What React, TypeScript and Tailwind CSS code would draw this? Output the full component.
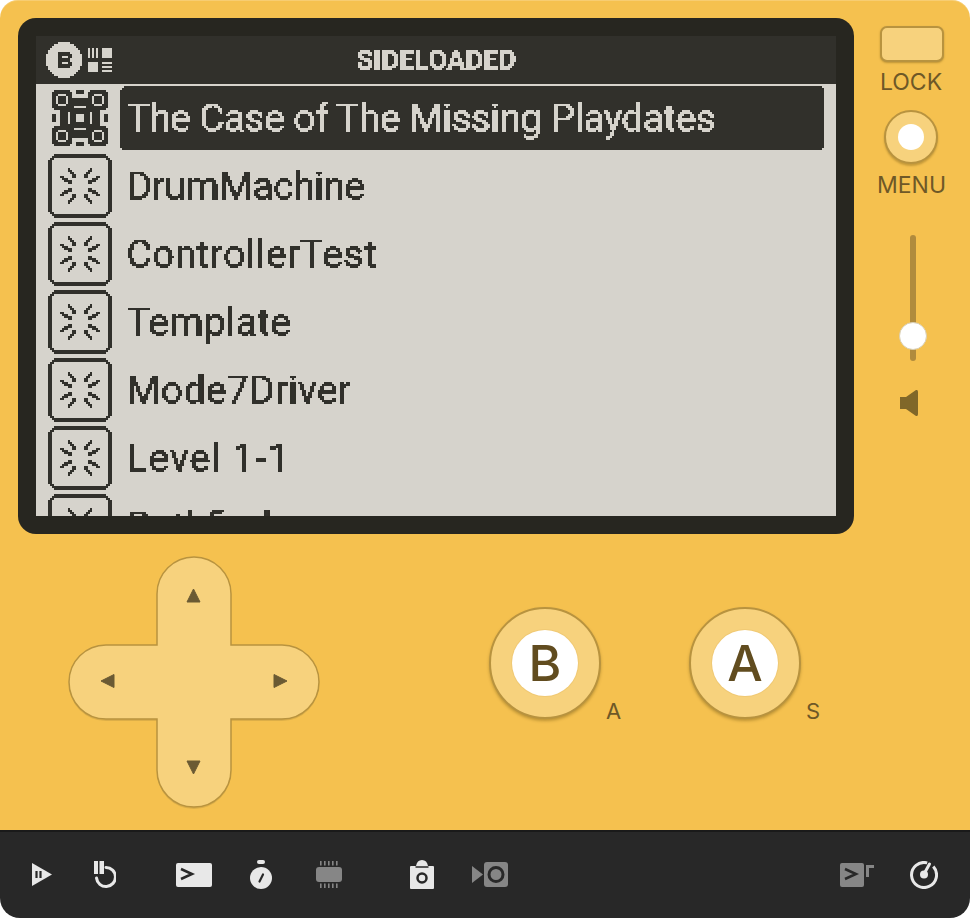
import React from 'react';

const DARK = '#31302B';
const LIGHT = '#D6D3CC';

const PixelFilter = () => (
    <svg className="absolute w-0 h-0" aria-hidden="true">
        <filter id="pixel" x="0" y="0" width="100%" height="100%" colorInterpolationFilters="sRGB" primitiveUnits="userSpaceOnUse">
            <feFlood floodColor="#000" floodOpacity="1" x="0" y="0" width="1" height="1" />
            <feComposite width="2" height="2" />
            <feTile result="grid" />
            <feComposite in="SourceGraphic" in2="grid" operator="in" />
            <feComponentTransfer result="hard">
                <feFuncA type="discrete" tableValues="0 1 1 1 1" />
            </feComponentTransfer>
            <feOffset in="hard" dx="1" dy="0" result="a" />
            <feMerge result="row">
                <feMergeNode in="hard" />
                <feMergeNode in="a" />
            </feMerge>
            <feOffset in="row" dx="0" dy="1" result="b" />
            <feMerge>
                <feMergeNode in="row" />
                <feMergeNode in="b" />
            </feMerge>
        </filter>
    </svg>
);

// one quadrant of the burst, in 32x32 icon pixels: [x, y, w]
const RAYS: number[][] = [
    [10, 7, 1], [10, 8, 2], [11, 9, 2], [12, 10, 2], [12, 11, 2],
    [6, 11, 2], [7, 12, 3], [8, 13, 4], [10, 14, 2],
];
const CORNERS: number[][] = [[2, 1], [2, 2], [1, 2]];

const BurstIcon = () => (
    <svg viewBox="0 0 32 32" className="w-16 h-16 shrink-0" shapeRendering="crispEdges" fill={DARK}>
        <rect x="3" y="0" width="26" height="2" />
        <rect x="3" y="30" width="26" height="2" />
        <rect x="0" y="3" width="2" height="26" />
        <rect x="30" y="3" width="2" height="26" />
        {CORNERS.map(([x, y]) => (
            <React.Fragment key={`${x}-${y}`}>
                <rect x={x} y={y} width="1" height="1" />
                <rect x={31 - x} y={y} width="1" height="1" />
                <rect x={x} y={31 - y} width="1" height="1" />
                <rect x={31 - x} y={31 - y} width="1" height="1" />
            </React.Fragment>
        ))}
        {RAYS.map(([x, y, w]) => (
            <React.Fragment key={`${x}-${y}`}>
                <rect x={x} y={y} width={w} height="1" />
                <rect x={32 - x - w} y={y} width={w} height="1" />
                <rect x={x} y={31 - y} width={w} height="1" />
                <rect x={32 - x - w} y={31 - y} width={w} height="1" />
            </React.Fragment>
        ))}
    </svg>
);

const Ring = ({ x, y }: { x: number; y: number }) => (
    <>
        <rect x={x + 1} y={y} width="8" height="10" fill={DARK} />
        <rect x={x} y={y + 1} width="10" height="8" fill={DARK} />
        <rect x={x + 3} y={y + 2} width="4" height="6" fill={LIGHT} />
        <rect x={x + 2} y={y + 3} width="6" height="4" fill={LIGHT} />
        <rect x={x + 3} y={y + 3} width="4" height="4" fill={DARK} />
    </>
);

const PatternIcon = () => (
    <svg viewBox="0 0 32 32" className="w-16 h-16 shrink-0" shapeRendering="crispEdges">
        <rect x="6" y="6" width="20" height="20" fill={DARK} />
        <rect x="14" y="2" width="4" height="2" fill={DARK} />
        <rect x="14" y="28" width="4" height="2" fill={DARK} />
        <rect x="2" y="14" width="2" height="4" fill={DARK} />
        <rect x="28" y="14" width="2" height="4" fill={DARK} />
        <Ring x={2} y={2} />
        <Ring x={20} y={2} />
        <Ring x={2} y={20} />
        <Ring x={20} y={20} />
        <rect x="13" y="10" width="6" height="12" fill={LIGHT} />
        <rect x="10" y="13" width="12" height="6" fill={LIGHT} />
        <rect x="13" y="11" width="6" height="10" fill={DARK} />
        <rect x="11" y="13" width="10" height="6" fill={DARK} />
        <rect x="14" y="14" width="4" height="4" fill={LIGHT} />
    </svg>
);

const HeaderBadge = () => (
    <svg viewBox="0 0 18 18" className="w-9 h-9" shapeRendering="crispEdges">
        <rect x="6" y="0" width="6" height="18" fill={LIGHT} />
        <rect x="4" y="1" width="10" height="16" fill={LIGHT} />
        <rect x="3" y="2" width="12" height="14" fill={LIGHT} />
        <rect x="2" y="3" width="14" height="12" fill={LIGHT} />
        <rect x="1" y="4" width="16" height="10" fill={LIGHT} />
        <rect x="0" y="6" width="18" height="6" fill={LIGHT} />
        <path d="M6 5h6v1h1v2h-1v2h1v2h-1v1H6z M8 7v1h3V7z M8 10v1h3v-1z" fill={DARK} fillRule="evenodd" />
    </svg>
);

const ViewIcon = () => (
    <svg viewBox="0 0 12 12" className="w-6 h-6 ml-[6px]" shapeRendering="crispEdges" fill={LIGHT}>
        <rect x="0" y="0" width="1" height="5" />
        <rect x="2" y="0" width="1" height="5" />
        <rect x="4" y="0" width="1" height="5" />
        <rect x="7" y="0" width="5" height="5" />
        <rect x="0" y="7" width="5" height="5" />
        <rect x="7" y="7" width="5" height="1" />
        <rect x="7" y="9" width="5" height="1" />
        <rect x="7" y="11" width="5" height="1" />
    </svg>
);

const GAMES = [
    { name: 'DrumMachine', tracking: 'tracking-[-0.5px]' },
    { name: 'ControllerTest', tracking: 'tracking-[0.4px]' },
    { name: 'Template', tracking: 'tracking-[0.3px]' },
    { name: 'Mode7Driver', tracking: 'tracking-[0.3px]' },
    { name: 'Level 1-1', tracking: 'tracking-[1px]' },
    { name: 'Pathfinder', tracking: 'tracking-normal' },
];

const Screen = () => (
    <div className="w-[800px] h-[480px] bg-[#D6D3CC] overflow-hidden">
        <div className="relative h-12 bg-[#31302B] flex items-center pl-[10px]">
            <HeaderBadge />
            <ViewIcon />
            <span className="absolute left-[320px] top-[10px] text-[27px] leading-[28px] font-bold text-[#D6D3CC] font-['Roboto',sans-serif] tracking-[0.2px] [filter:url(#pixel)]">
                SIDELOADED
            </span>
        </div>
        <div className="h-[68px] flex items-center pl-3">
            <PatternIcon />
            <div className="ml-2 w-[704px] h-16 bg-[#31302B] rounded-[6px] flex items-center pl-[6px] [filter:url(#pixel)]">
                <span className="text-[39px] leading-[48px] tracking-[-0.6px] text-[#D6D3CC] font-['Roboto',sans-serif] [filter:url(#pixel)]">
                    The Case of The Missing Playdates
                </span>
            </div>
        </div>
        {GAMES.map(game => (
            <div key={game.name} className="h-[68px] flex items-center pl-3">
                <BurstIcon />
                <span className={`ml-[14px] text-[39px] leading-[48px] text-[#31302B] font-['Roboto',sans-serif] [filter:url(#pixel)] ${game.tracking}`}>
                    {game.name}
                </span>
            </div>
        ))}
    </div>
);

const SideControls = () => (
    <div className="w-[116px] flex flex-col items-center pt-2 text-[#6E5827] font-['Inter',sans-serif]">
        <button className="w-16 h-9 rounded-[7px] bg-[#F7D27D] border-2 border-[#B8933F] shadow-[0_1px_2px_rgba(90,65,10,0.35)]" />
        <div className="mt-[6px] -ml-[2px] text-[23px] leading-[28px] font-normal">LOCK</div>
        <button className="mt-[14px] -ml-[2px] w-[54px] h-[54px] rounded-full bg-[#F7D27D] border-2 border-[#B8933F] shadow-[0_2px_2px_rgba(90,65,10,0.3)] flex items-center justify-center">
            <span className="w-[26px] h-[26px] rounded-full bg-white" />
        </button>
        <div className="mt-[7px] -ml-[1px] text-[23px] leading-[28px] font-normal">MENU</div>
        <div className="relative mt-[36px] ml-[2px] w-[6px] h-[126px] rounded-full bg-[#B08B3D]">
            <span className="absolute left-[-11px] top-[87px] w-7 h-7 rounded-full bg-white border border-[#D9CFB4]" />
        </div>
        <svg viewBox="0 0 18 26" className="mt-[29px] -ml-[7px] w-[18px] h-[26px]" fill="#806729">
            <path d="M0 7h6l10-7q2-.5 2 2v22q0 2.500-2 2L6 19H0z" />
        </svg>
    </div>
);

const CROSS = 'M90 89V38a37 37 0 0 1 74 0v51h51a37 37 0 0 1 0 74h-51v51a37 37 0 0 1-74 0v-51H39a37 37 0 0 1 0-74z';

const DPad = () => (
    <svg viewBox="0 0 254 256" className="w-[254px] h-[256px] shrink-0">
        <path d={CROSS} fill="#B08B3D" fillOpacity="0.35" transform="translate(0 2)" />
        <path d={CROSS} fill="#F7D27D" stroke="#B8933F" strokeWidth="1.500" />
        <g fill="#6B5A33" stroke="#6B5A33" strokeWidth="1" strokeLinejoin="round">
            <path d="M126.500 33l6.500 13h-13z" />
            <path d="M126.500 218l6.500-13h-13z" />
            <path d="M34 125l13-6.500v13z" />
            <path d="M220 125l-13-6.500v13z" />
        </g>
    </svg>
);

const RoundButton = ({ letter, hotkey }: { letter: string; hotkey: string }) => (
    <div className="relative w-[112px] h-[112px] shrink-0 rounded-full bg-[#F7D27D] border-2 border-[#B8933F] shadow-[0_2px_3px_rgba(90,65,10,0.35)] flex items-center justify-center">
        <span className="w-[66px] h-[66px] rounded-full bg-white shadow-[0_0_0_1px_#F0C974] flex items-center justify-center text-[50px] leading-none font-medium text-[#614C1F] font-['Inter',sans-serif]">
            {letter}
        </span>
        <span className="absolute left-[115px] top-[90px] text-[22px] leading-6 text-[#6E5827] font-['Inter',sans-serif]">
            {hotkey}
        </span>
    </div>
);

const Toolbar = () => (
    <div className="h-[88px] bg-[#282828] border-t-2 border-[#1A1A1A] rounded-b-[20px] flex items-center pb-[1px]">
        <svg viewBox="0 0 20 24" className="ml-8 w-5 h-6">
            <path d="M0 0l20 11.500L0 23z" fill="#E8E8E8" />
            <path d="M4.500 8v7M8.500 8v7" stroke="#282828" strokeWidth="2.200" />
        </svg>
        <svg viewBox="0 0 22 28" className="ml-[42px] w-[22px] h-7">
            <path d="M12 6.500A9.500 9.500 0 1 1 2.500 17" fill="none" stroke="#E8E8E8" strokeWidth="3" strokeLinecap="round" />
            <path d="M0 0h4v13H0zM5.500 0h4.500v13H5.500z" fill="#E8E8E8" />
        </svg>
        <svg viewBox="0 0 36 24" className="ml-[60px] w-9 h-6">
            <rect width="36" height="24" rx="2" fill="#E8E8E8" />
            <path d="M5 6l11 5-11 5" fill="none" stroke="#282828" strokeWidth="2.500" />
        </svg>
        <svg viewBox="0 0 22 29" className="ml-[38px] w-[22px] h-[29px]">
            <rect x="7" y="0" width="8" height="4" rx="2" fill="#E8E8E8" />
            <circle cx="11" cy="18" r="11" fill="#E8E8E8" />
            <path d="M9.500 21.500l3.500-7" stroke="#282828" strokeWidth="2.200" strokeLinecap="round" />
        </svg>
        <svg viewBox="0 0 26 27" className="ml-[44px] w-[26px] h-[27px]">
            <rect x="0" y="6" width="26" height="15" rx="3" fill="#868686" />
            {[4, 8, 12, 16, 20].map(x => (
                <React.Fragment key={x}>
                    <rect x={x} y="0" width="1.600" height="4.500" fill="#868686" />
                    <rect x={x} y="22.500" width="1.600" height="4.500" fill="#868686" />
                </React.Fragment>
            ))}
        </svg>
        <svg viewBox="0 0 24 29" className="ml-[68px] w-6 h-[29px]">
            <path d="M1 6h5q1-6 6-6t6 6h5q1 0 1 1v21q0 1-1 1H1q-1 0-1-1V7q0-1 1-1z" fill="#E8E8E8" />
            <path d="M5.500 7h13" stroke="#282828" strokeWidth="1.500" />
            <circle cx="12" cy="18" r="4.500" fill="none" stroke="#282828" strokeWidth="2.500" />
        </svg>
        <svg viewBox="0 0 36 25" className="ml-[38px] w-9 h-[25px]">
            <path d="M0 4l11 8.500L0 21z" fill="#868686" />
            <rect x="12" y="0" width="24" height="25" rx="3" fill="#868686" />
            <circle cx="24" cy="12.500" r="7" fill="none" stroke="#282828" strokeWidth="3" />
        </svg>
        <div className="ml-auto flex items-center">
            <svg viewBox="0 0 24 24" className="w-6 h-6">
                <rect width="24" height="24" rx="2" fill="#868686" />
                <path d="M5 6l11 5-11 5" fill="none" stroke="#282828" strokeWidth="2.500" />
            </svg>
            <svg viewBox="0 0 8 12" className="ml-[2px] -mt-[8px] w-2 h-3">
                <path d="M0 0h8v3H3v9H0z" fill="#868686" />
            </svg>
        </div>
        <svg viewBox="0 0 28 28" className="ml-[36px] mr-8 w-7 h-7">
            <path d="M23.300 5.600A12.500 12.500 0 1 1 17.200 1.900" fill="none" stroke="#E8E8E8" strokeWidth="3" strokeLinecap="butt" />
            <path d="M14 13L19.500 3" stroke="#E8E8E8" strokeWidth="3" strokeLinecap="round" />
            <circle cx="14" cy="13.500" r="4" fill="#E8E8E8" />
        </svg>
    </div>
);

export default function App() {
    return (
        <div className="w-[970px] h-[918px] bg-white">
            <PixelFilter />
            <div className="h-[830px] bg-[#F5C14F] rounded-t-[18px] shadow-[inset_0_1px_0_rgba(255,255,255,0.2)] flex flex-col pt-[18px] pl-[18px]">
                <div className="flex">
                    <div className="w-[836px] h-[516px] p-[18px] bg-[#272620] rounded-[18px]">
                        <Screen />
                    </div>
                    <SideControls />
                </div>
                <div className="flex items-start mt-[22px] ml-[49px]">
                    <DPad />
                    <div className="ml-[168px] mt-[51px]"><RoundButton letter="B" hotkey="A" /></div>
                    <div className="ml-[88px] mt-[51px]"><RoundButton letter="A" hotkey="S" /></div>
                </div>
            </div>
            <Toolbar />
        </div>
    );
}
